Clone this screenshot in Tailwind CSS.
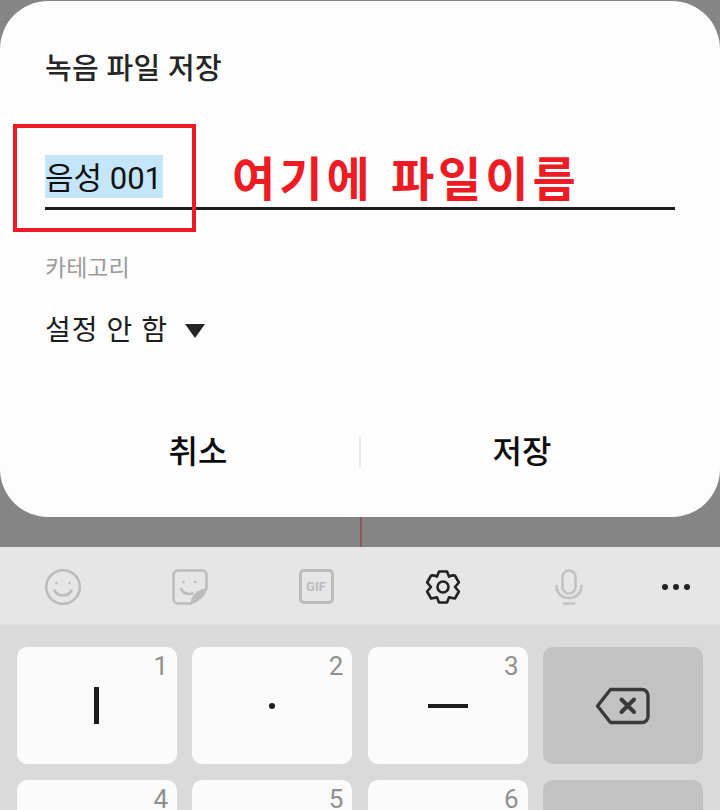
<!DOCTYPE html>
<html lang="ko">
<head>
  <meta charset="UTF-8" />
  <meta name="viewport" content="width=device-width, initial-scale=1" />
  <title>녹음 파일 저장</title>
  <script src="https://cdn.jsdelivr.net/npm/@tailwindcss/browser@4"></script>
</head>
<body class="relative w-[720px] h-[810px] overflow-hidden bg-[#dadada] font-['Roboto','Noto_Sans_CJK_KR',sans-serif]">

  <!-- dimmed background + dialog -->
  <div class="relative bg-[#858585] pt-px h-[547px]">
    <div class="bg-[#fdfdfd] rounded-[48px] h-[516px] px-[45px] flex flex-col">
      <h1 class="mt-[48px] h-10 leading-10 text-[29px] font-medium text-[#252525] whitespace-nowrap tracking-[0.3px]">녹음 파일 저장</h1>

      <!-- file name -->
      <div class="mt-[66px] h-[55px] border-b-[3px] border-[#1c1c1c] w-[630px]">
        <span class="inline-block w-[118px] h-[43px] leading-[47px] bg-[#c5e6fa] text-[31px] text-[#111] whitespace-nowrap">음성 001</span>
      </div>

      <p class="mt-[43px] text-[23px] leading-8 text-[#9a9a9a]">카테고리</p>

      <div class="mt-[26px] flex items-center gap-[17px] h-10">
        <span class="text-[28px] leading-10 text-[#1c1c1c] tracking-[1px]">설정 안 함</span>
        <svg class="w-[20px] h-[14px]" viewBox="0 0 20 14"><path d="M0 0h20L10 14z" fill="#252525"/></svg>
      </div>

      <!-- buttons -->
      <div class="mt-[76px] -mx-[45px] flex items-center h-[50px] text-[32px] font-medium text-[#0c0c0c]">
        <button class="w-[359px] pl-[37px] text-center">취소</button>
        <div class="w-[2px] h-[30px] bg-[#e6e6e6]"></div>
        <button class="flex-1 pr-[37px] text-center">저장</button>
      </div>
    </div>
    <!-- thin cursor line behind the dialog -->
    <div class="absolute left-[360px] top-[517px] w-[2px] h-[30px] bg-[#8a5a5f]"></div>
  </div>

  <!-- keyboard toolbar -->
  <div class="flex items-center h-[78px] pt-[2px] bg-[#e6e6e6] border-b border-[#e0e0e0]">
    <div class="w-[126.5px] flex justify-center">
      <svg class="w-[38px] h-[38px]" viewBox="0 0 38 38" fill="none" stroke="#bcbcbc" stroke-width="2.6" stroke-linecap="round">
        <circle cx="19" cy="19" r="16.8"/>
        <circle cx="12.5" cy="15" r="1.3" fill="#bcbcbc" stroke="none"/>
        <circle cx="25.5" cy="15" r="1.3" fill="#bcbcbc" stroke="none"/>
        <path d="M10.5 22.5c2 3.6 5 5 8.500 5s6.500-1.400 8.500-5"/>
      </svg>
    </div>
    <div class="w-[126.5px] flex justify-center">
      <svg class="w-[36px] h-[36px]" viewBox="0 0 36 36" fill="none" stroke="#bcbcbc" stroke-width="2.600" stroke-linecap="round" stroke-linejoin="round">
        <path d="M19 34.500H6a4.500 4.500 0 0 1-4.500-4.500V6A4.500 4.500 0 0 1 6 1.500h24A4.500 4.500 0 0 1 34.500 6v14"/>
        <path d="M19 34.500c1-7 6-13 15.500-14.500-2 7-8 12-15.500 14.500z" fill="#bcbcbc" stroke-width="1.500"/>
        <circle cx="11.500" cy="13" r="1.300" fill="#bcbcbc" stroke="none"/>
        <circle cx="23" cy="13" r="1.300" fill="#bcbcbc" stroke="none"/>
        <path d="M9 20c2 3.500 5 5 8.500 5 1.200 0 2.200-.2 3-.6"/>
      </svg>
    </div>
    <div class="w-[126.5px] flex justify-center">
      <div class="w-[35px] h-[35px] border-[3px] border-[#bcbcbc] rounded-[5px] flex items-center justify-center text-[13px] leading-none font-bold text-[#bcbcbc]">GIF</div>
    </div>
    <div class="w-[126.5px] flex justify-center">
      <svg class="w-[36px] h-[36px] ml-[1px]" viewBox="0 0 36 36" fill="none" stroke="#222" stroke-width="2.600" stroke-linecap="round" stroke-linejoin="round">
        <circle cx="18" cy="18" r="5.500"/>
        <path d="M14 2.500H22Q24 7.600 24 7.600 27 6 29.900 6.500L33.900 13.500Q30 18 30 18 30 18 33.900 22.500L29.900 29.500Q24 28.400 24 28.400L22 33.500H14L12 28.400Q12 28.400 6.100 29.500L2.100 22.500Q6 18 6 18 6 18 2.100 13.500L6.100 6.500Q9 6 12 7.600z"/>
      </svg>
    </div>
    <div class="w-[126.5px] flex justify-center">
      <svg class="w-[28px] h-[36px]" viewBox="0 0 28 36" fill="none" stroke="#c2c2c2" stroke-width="2.600" stroke-linecap="round">
        <rect x="7.500" y="1.500" width="13" height="23" rx="6.500"/>
        <path d="M1.500 17c0 7.500 5.500 12 12.500 12s12.500-4.500 12.500-12"/>
        <path d="M9 34.500h10"/>
      </svg>
    </div>
    <div class="w-[88px] flex justify-center gap-[5px]">
      <span class="w-[6px] h-[6px] rounded-full bg-[#222]"></span>
      <span class="w-[6px] h-[6px] rounded-full bg-[#222]"></span>
      <span class="w-[6px] h-[6px] rounded-full bg-[#222]"></span>
    </div>
  </div>

  <!-- keys -->
  <div class="grid grid-cols-[160px_160px_160px_160px] gap-x-[15.33px] gap-y-[16px] pl-[17px] pt-[22px] auto-rows-[117px]">
    <div class="relative rounded-[10px] bg-[#fbfbfb] flex items-center justify-center">
      <span class="absolute top-[3px] right-[9px] text-[26px] leading-8 text-[#8f8f8f]">1</span>
      <span class="w-[5px] h-[37px] bg-[#1c1c1c] -ml-[2px]"></span>
    </div>
    <div class="relative rounded-[10px] bg-[#fbfbfb] flex items-center justify-center">
      <span class="absolute top-[3px] right-[9px] text-[26px] leading-8 text-[#8f8f8f]">2</span>
      <span class="w-[6px] h-[6px] rounded-full bg-[#1c1c1c] -ml-[1px]"></span>
    </div>
    <div class="relative rounded-[10px] bg-[#fbfbfb] flex items-center justify-center">
      <span class="absolute top-[3px] right-[9px] text-[26px] leading-8 text-[#8f8f8f]">3</span>
      <span class="w-[40px] h-[4px] bg-[#1c1c1c]"></span>
    </div>
    <div class="rounded-[10px] bg-[#c2c2c2] flex items-center justify-center">
      <svg class="w-[56px] h-[38px]" viewBox="0 0 56 38" fill="none" stroke="#3a3a3a" stroke-width="3.400" stroke-linecap="round" stroke-linejoin="round">
        <path d="M15.500 2.500H47a6 6 0 0 1 6 6v21a6 6 0 0 1-6 6H15.500L2.500 19z"/>
        <path d="M26.500 12.500l12.500 12.500M39 12.500L26.500 25" stroke-width="4"/>
      </svg>
    </div>
    <div class="relative rounded-[10px] bg-[#fbfbfb]">
      <span class="absolute top-[3px] right-[9px] text-[26px] leading-8 text-[#8f8f8f]">4</span>
    </div>
    <div class="relative rounded-[10px] bg-[#fbfbfb]">
      <span class="absolute top-[3px] right-[9px] text-[26px] leading-8 text-[#8f8f8f]">5</span>
    </div>
    <div class="relative rounded-[10px] bg-[#fbfbfb]">
      <span class="absolute top-[3px] right-[9px] text-[26px] leading-8 text-[#8f8f8f]">6</span>
    </div>
    <div class="rounded-[10px] bg-[#c2c2c2]"></div>
  </div>

  <!-- red annotation over the screenshot -->
  <div class="absolute left-[13px] top-[124px] w-[183px] h-[108px] border-[4px] border-[#ed1c24]"></div>
  <div class="absolute left-[232px] top-[142px] text-[47px] leading-[68px] tracking-[4px] font-bold text-[#ed1c24] whitespace-nowrap font-['Noto_Sans_CJK_KR',sans-serif]">여기에 파일이름</div>
</body>
</html>
